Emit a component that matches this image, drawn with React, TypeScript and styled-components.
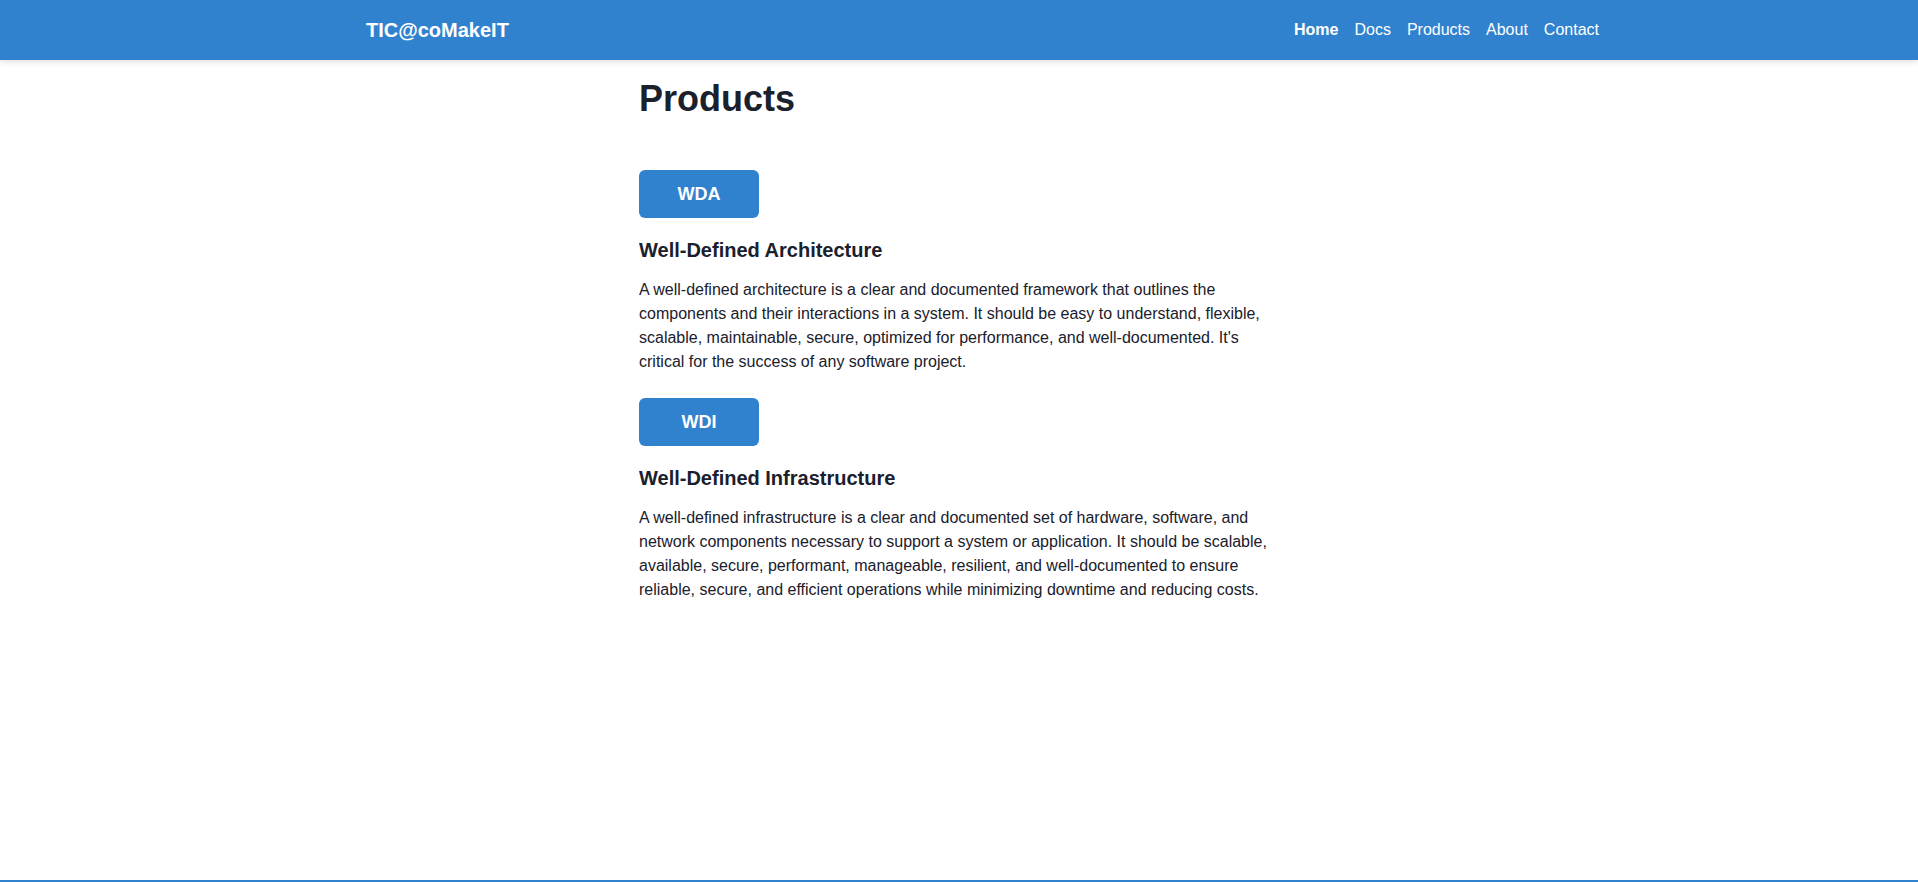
import React from 'react'
import styled, { createGlobalStyle } from 'styled-components'

const GlobalStyle = createGlobalStyle`
    * {
        box-sizing: border-box;
    }
    body {
        margin: 0;
        background: #ffffff;
        color: #1a202c;
        font-family: "Liberation Sans", Arial, sans-serif;
    }
`;

const Shell = styled.div`
    min-height: calc(100vh - 2px);
    display: flex;
    flex-direction: column;
`;

const Navbar = styled.header`
    background: #3182ce;
    height: 60px;
    box-shadow: 0 2px 6px rgba(0, 0, 0, 0.12);
`;

const NavInner = styled.div`
    max-width: 1280px;
    height: 100%;
    margin: 0 auto;
    padding-left: 47px;
    display: flex;
    align-items: center;
    justify-content: space-between;
`;

const Logo = styled.a`
    color: #ffffff;
    font-size: 20px;
    font-weight: 700;
    text-decoration: none;
`;

const Links = styled.nav`
    display: flex;
    align-items: center;
    gap: 16px;
`;

const NavLink = styled.a<{ $active?: boolean }>`
    color: #ffffff;
    font-size: 16px;
    font-weight: ${p => (p.$active ? 700 : 400)};
    text-decoration: none;
`;

const Main = styled.main`
    flex: 1;
    width: 640px;
    margin: 0 auto;
    padding-top: 17px;
`;

const Title = styled.h1`
    margin: 0 0 50px;
    font-size: 36px;
    line-height: 1.2;
    font-weight: 700;
    color: #1a202c;
`;

const Product = styled.section`
    margin-bottom: 24px;
`;

const Badge = styled.button`
    display: block;
    width: 120px;
    height: 48px;
    margin-bottom: 20px;
    border: none;
    border-radius: 6px;
    background: #3182ce;
    color: #ffffff;
    font-family: inherit;
    font-size: 18px;
    font-weight: 700;
    cursor: pointer;
`;

const Heading = styled.h2`
    margin: 0 0 16px;
    font-size: 20px;
    line-height: 1.2;
    font-weight: 700;
    color: #1a202c;
`;

const Text = styled.p`
    margin: 0;
    font-size: 16px;
    line-height: 24px;
    color: #1a202c;
`;

const Footer = styled.footer`
    border-top: 2px solid #3182ce;
    padding: 16px 0;
`;

const products = [
    {
        code: 'WDA',
        title: 'Well-Defined Architecture',
        text: "A well-defined architecture is a clear and documented framework that outlines the components and their interactions in a system. It should be easy to understand, flexible, scalable, maintainable, secure, optimized for performance, and well-documented. It's critical for the success of any software project.",
    },
    {
        code: 'WDI',
        title: 'Well-Defined Infrastructure',
        text: 'A well-defined infrastructure is a clear and documented set of hardware, software, and network components necessary to support a system or application. It should be scalable, available, secure, performant, manageable, resilient, and well-documented to ensure reliable, secure, and efficient operations while minimizing downtime and reducing costs.',
    },
]

const App = () => {
    return (
        <>
            <GlobalStyle />
            <Shell>
                <Navbar>
                    <NavInner>
                        <Logo href="#">TIC@coMakeIT</Logo>
                        <Links>
                            <NavLink href="#" $active>Home</NavLink>
                            <NavLink href="#">Docs</NavLink>
                            <NavLink href="#">Products</NavLink>
                            <NavLink href="#">About</NavLink>
                            <NavLink href="#">Contact</NavLink>
                        </Links>
                    </NavInner>
                </Navbar>
                <Main>
                    <Title>Products</Title>
                    {products.map(p => (
                        <Product key={p.code}>
                            <Badge>{p.code}</Badge>
                            <Heading>{p.title}</Heading>
                            <Text>{p.text}</Text>
                        </Product>
                    ))}
                </Main>
            </Shell>
            <Footer />
        </>
    )
}

export default App
